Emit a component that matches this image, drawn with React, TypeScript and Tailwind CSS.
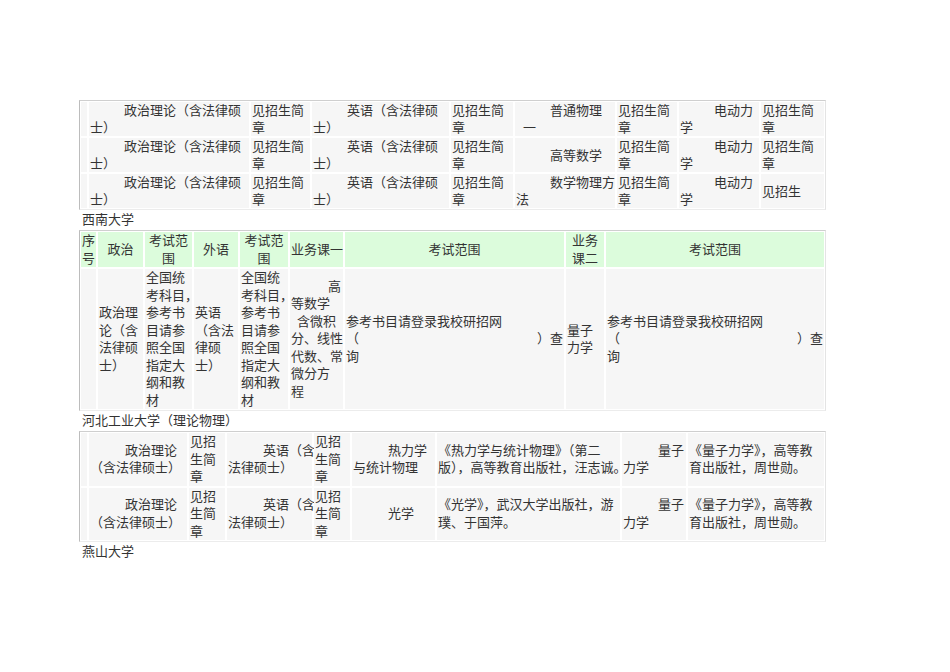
import React from "react";

const base = "bg-[#f6f6f6] px-[1px] flex flex-col justify-center";
const head = "bg-[#dcfcdc] px-[1px] flex flex-col justify-center text-center";
const tableBox =
  "grid gap-[2px] p-[1px] border border-t-[#cfcfcf] border-l-[#bcbcbc] border-r-[#e4e4e4] border-b-[#ececec]";

function C({ children, className = "" }: { children?: React.ReactNode; className?: string }) {
  return <div className={base + " " + className}>{children}</div>;
}
function H({ children, className = "" }: { children?: React.ReactNode; className?: string }) {
  return <div className={head + " " + className}>{children}</div>;
}
function Lines({ items, className = "" }: { items: string[]; className?: string }) {
  return (
    <div className={className}>
      {items.map((t, i) => (
        <div key={i} className="whitespace-nowrap">
          {t}
        </div>
      ))}
    </div>
  );
}

function Table1() {
  const rows = [
    { six: "a", nine: "见招生简章" },
    { six: "b", nine: "见招生简章" },
    { six: "c", nine: "见招生" },
  ];
  return (
    <div
      className={
        tableBox +
        " grid-cols-[6px_160px_59px_137px_62px_100px_60px_80px_63px] leading-[17px]"
      }
    >
      {rows.map((r, i) => (
        <React.Fragment key={i}>
          <C />
          <C>
            <div className="indent-[34px]">政治理论（含法律硕士）</div>
          </C>
          <C>
            <div>见招生简章</div>
          </C>
          <C>
            <div className="indent-[34px]">英语（含法律硕士）</div>
          </C>
          <C>
            <div>见招生简章</div>
          </C>
          <C>
            {r.six === "a" && (
              <div>
                <div className="pl-[34px] whitespace-nowrap">普通物理</div>
                <div className="pl-[7px]">一</div>
              </div>
            )}
            {r.six === "b" && <div className="pl-[34px] whitespace-nowrap">高等数学</div>}
            {r.six === "c" && (
              <div>
                <div className="pl-[34px] whitespace-nowrap">数学物理方</div>
                <div>法</div>
              </div>
            )}
          </C>
          <C>
            <div>见招生简章</div>
          </C>
          <C>
            <div className="indent-[34px]">电动力学</div>
          </C>
          <C>
            <div>{r.nine}</div>
          </C>
        </React.Fragment>
      ))}
    </div>
  );
}

function Table2() {
  const fanwei = ["全国统", "考科目，", "参考书", "目请参", "照全国", "指定大", "纲和教", "材"];
  return (
    <div
      className={
        tableBox +
        " grid-cols-[15px_45px_47px_44px_48px_53px_219px_38px_218px] leading-[17.5px]"
      }
    >
      <H>
        <div>序</div>
        <div>号</div>
      </H>
      <H>
        <div>政治</div>
      </H>
      <H>
        <div>考试范围</div>
      </H>
      <H>
        <div>外语</div>
      </H>
      <H>
        <div>考试范围</div>
      </H>
      <H className="px-0">
        <div className="whitespace-nowrap">业务课一</div>
      </H>
      <H>
        <div>考试范围</div>
      </H>
      <H>
        <div>业务课二</div>
      </H>
      <H>
        <div>考试范围</div>
      </H>

      <C />
      <C>
        <Lines items={["政治理", "论（含", "法律硕", "士）"]} />
      </C>
      <C>
        <Lines items={fanwei} />
      </C>
      <C>
        <Lines items={["英语", "（含法", "律硕", "士）"]} />
      </C>
      <C>
        <Lines items={fanwei} />
      </C>
      <C className="px-0">
        <div>
          <div className="pl-[37px]">高</div>
          <div className="whitespace-nowrap">等数学</div>
          <div className="pl-[6px] whitespace-nowrap">含微积</div>
          <div className="whitespace-nowrap">分、线性</div>
          <div className="whitespace-nowrap">代数、常</div>
          <div className="whitespace-nowrap">微分方</div>
          <div>程</div>
        </div>
      </C>
      <C>
        <div>
          <div className="whitespace-nowrap">参考书目请登录我校研招网</div>
          <div className="flex justify-between">
            <span>（</span>
            <span>）查</span>
          </div>
          <div>询</div>
        </div>
      </C>
      <C>
        <Lines items={["量子", "力学"]} />
      </C>
      <C>
        <div>
          <div className="whitespace-nowrap">参考书目请登录我校研招网</div>
          <div className="flex justify-between">
            <span>（</span>
            <span>）查</span>
          </div>
          <div>询</div>
        </div>
      </C>
    </div>
  );
}

function Table3() {
  const rows = [
    {
      six: <div className="indent-[35px]">热力学与统计物理</div>,
      seven: ["《热力学与统计物理》（第二", "版），高等教育出版社，汪志诚。"],
    },
    {
      six: <div className="pl-[35px] whitespace-nowrap">光学</div>,
      seven: ["《光学》，武汉大学出版社，游", "璞、于国萍。"],
    },
  ];
  return (
    <div
      className={
        tableBox +
        " grid-cols-[6px_98px_36px_85px_36px_83px_183px_64px_136px] leading-[17.5px]"
      }
    >
      {rows.map((r, i) => (
        <React.Fragment key={i}>
          <C />
          <C>
            <div className="indent-[35px]">政治理论（含法律硕士）</div>
          </C>
          <C>
            <Lines items={["见招", "生简", "章"]} />
          </C>
          <C>
            <div>
              <div className="pl-[35px] whitespace-nowrap">英语（含</div>
              <div className="whitespace-nowrap">法律硕士）</div>
            </div>
          </C>
          <C>
            <Lines items={["见招", "生简", "章"]} />
          </C>
          <C>{r.six}</C>
          <C>
            <Lines items={r.seven} />
          </C>
          <C>
            <div className="indent-[35px]">量子力学</div>
          </C>
          <C>
            <Lines items={["《量子力学》，高等教", "育出版社，周世勋。"]} />
          </C>
        </React.Fragment>
      ))}
    </div>
  );
}

export default function App() {
  return (
    <div className="min-h-[672px] bg-white text-[#333] text-[13px] font-['Liberation_Serif','Noto_Sans_CJK_SC',serif]">
      <div className="pt-[100px] pl-[79px] w-[826px]">
        <div className="w-[747px]">
          <Table1 />
          <div className="pl-[3px] leading-[20px]">西南大学</div>
          <Table2 />
          <div className="pl-[3px] leading-[20px]">河北工业大学（理论物理）</div>
          <Table3 />
          <div className="pl-[3px] leading-[20px]">燕山大学</div>
        </div>
      </div>
    </div>
  );
}
